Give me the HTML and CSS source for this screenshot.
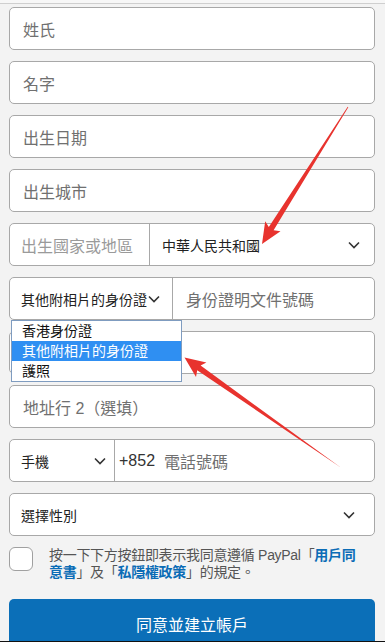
FILE: index.html
```html
<!DOCTYPE html>
<html lang="zh-Hant">
<head>
<meta charset="utf-8">
<link rel="stylesheet" href="styles.css">
</head>
<body>
<div class="topbar"></div>
<form class="form">
  <div class="field"><span class="ph">姓氏</span></div>
  <div class="field"><span class="ph">名字</span></div>
  <div class="field"><span class="ph">出生日期</span></div>
  <div class="field"><span class="ph">出生城市</span></div>
  <div class="field split">
    <div class="part country-label"><span class="ph light">出生國家或地區</span></div>
    <div class="part country-select">
      <span class="val">中華人民共和國</span>
      <svg class="chev" viewBox="0 0 12 8" width="12" height="8"><path d="M1 1.5l5 5 5-5" fill="none" stroke="#333" stroke-width="1.6"/></svg>
    </div>
  </div>
  <div class="field split idrow">
    <div class="part id-select">
      <span class="val">其他附相片的身份證</span>
      <svg class="chev tight" viewBox="0 0 12 8" width="12" height="8"><path d="M1 1.5l5 5 5-5" fill="none" stroke="#333" stroke-width="1.6"/></svg>
    </div>
    <div class="part id-input"><span class="ph">身份證明文件號碼</span></div>
    <ul class="dropdown">
      <li>香港身份證</li>
      <li class="sel">其他附相片的身份證</li>
      <li>護照</li>
    </ul>
  </div>
  <div class="field"></div>
  <div class="field"><span class="ph">地址行 2（選填）</span></div>
  <div class="field split">
    <div class="part phone-type">
      <span class="val">手機</span>
      <svg class="chev" viewBox="0 0 12 8" width="12" height="8"><path d="M1 1.5l5 5 5-5" fill="none" stroke="#333" stroke-width="1.6"/></svg>
    </div>
    <div class="part phone-num"><span class="code">+852</span><span class="ph">電話號碼</span></div>
  </div>
  <div class="field gender">
    <span class="val">選擇性別</span>
    <svg class="chev" viewBox="0 0 12 8" width="12" height="8"><path d="M1 1.5l5 5 5-5" fill="none" stroke="#333" stroke-width="1.6"/></svg>
  </div>
  <div class="agree">
    <span class="box"></span>
    <p class="terms">按一下下方按鈕即表示我同意遵循 PayPal「<a>用戶同</a><br><a>意書</a>」及「<a>私隱權政策</a>」的規定。</p>
  </div>
  <button type="button" class="submit">同意並建立帳戶</button>
</form>
<svg class="arrows" width="385" height="642" viewBox="0 0 385 642">
  <polygon fill="#e8332e" points="348.3,107.2 273.6,230.2 280.5,231.2 262,244 265.2,221.2 268.8,227.1 347.7,106.8"/>
  <polygon fill="#e8332e" points="340.4,467.3 200.6,365.6 206.4,362.6 184.5,357.5 196,377 197.2,370.2 339.6,466.7"/>
</svg>
<div class="bottomline"></div>
</body>
</html>
```
FILE: styles.css
```css
* { box-sizing: border-box; }
html, body { margin: 0; padding: 0; }
body {
  width: 385px;
  height: 642px;
  overflow: hidden;
  background: #f3f3f3;
  font-family: "Liberation Sans", "Noto Sans CJK TC", sans-serif;
  color: #222;
  position: relative;
}
.topbar {
  height: 4px;
  border-bottom: 1px solid #cfcfcf;
  background: #f7f7f7;
}
.form {
  display: flex;
  flex-direction: column;
  gap: 11px;
  padding: 3px 10px 0 9px;
}
.field {
  position: relative;
  height: 43px;
  background: #fff;
  border: 1px solid #a8a8a8;
  border-radius: 5px;
  display: flex;
  align-items: center;
  padding: 0 13px;
}
.ph {
  font-size: 16px;
  color: #707070;
  white-space: nowrap;
}
.ph.light { color: #9a9a9a; }
.val {
  font-size: 14px;
  color: #222;
  white-space: nowrap;
}
.chev { display: block; flex: none; }
.field.split { padding: 0; }
.part {
  height: 100%;
  display: flex;
  align-items: center;
}
.country-label {
  width: 140px;
  padding-left: 11px;
  border-right: 1px solid #a8a8a8;
}
.country-select {
  flex: 1;
  padding: 0 14px 0 12px;
  justify-content: space-between;
}
.id-select {
  width: 163px;
  padding-left: 11px;
  border-right: 1px solid #a8a8a8;
}
.chev.tight { margin-left: 1px; }
.id-input {
  flex: 1;
  padding-left: 13px;
}
.dropdown {
  position: absolute;
  left: 1px;
  top: 42px;
  width: 171px;
  margin: 0;
  padding: 0;
  list-style: none;
  background: #fff;
  border: 1px solid #7f9cc0;
  z-index: 2;
}
.dropdown li {
  height: 20px;
  line-height: 20px;
  font-size: 14px;
  padding-left: 10px;
  color: #111;
}
.dropdown li.sel {
  background: #2f8ff2;
  color: #fff;
}
.phone-type {
  width: 105px;
  padding: 0 8px 0 11px;
  justify-content: space-between;
  border-right: 1px solid #a8a8a8;
}
.phone-num {
  flex: 1;
  padding-left: 4px;
  gap: 9px;
}
.code {
  font-size: 16px;
  color: #333;
}
.gender {
  padding: 0 19px 0 11px;
  justify-content: space-between;
}
.agree {
  display: flex;
  align-items: flex-start;
  gap: 16px;
  height: 41px;
}
.box {
  flex: none;
  width: 24px;
  height: 24px;
  background: #fff;
  border: 1px solid #a0a0a0;
  border-radius: 6px;
}
.terms {
  margin: 0;
  font-size: 14px;
  line-height: 17px;
  color: #555;
  letter-spacing: -0.3px;
}
.terms a {
  color: #0b6cb6;
  font-weight: bold;
}
.submit {
  height: 42px;
  border: none;
  border-radius: 5px 5px 0 0;
  background: #0b6fb8;
  color: #fff;
  font-family: "Liberation Sans", "Noto Sans CJK TC", sans-serif;
  font-size: 16px;
  padding: 7px 0 0;
}
.arrows {
  position: absolute;
  left: 0;
  top: 0;
  pointer-events: none;
  z-index: 5;
}
.bottomline {
  position: absolute;
  left: 0;
  right: 0;
  bottom: 0;
  height: 1px;
  background: #111;
  z-index: 6;
}
```
